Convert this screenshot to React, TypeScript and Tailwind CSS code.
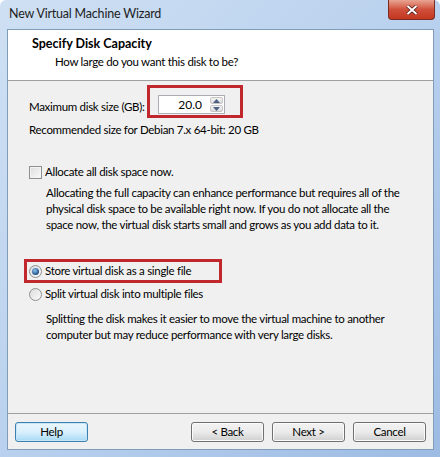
import React from 'react';

const font = { fontFamily: 'Lato, "Liberation Sans", Arial, sans-serif' };

function WinButton({ label, primary }: { label: string; primary?: boolean }) {
  return (
    <button
      className={
        primary
          ? 'h-[20px] w-[73px] rounded-[3px] border border-[#3c7fb1] bg-gradient-to-b from-[#eaf6fd] via-[#d9f0fc] to-[#a7d9f5] text-black shadow-[inset_0_0_0_1px_#c8e6f8]'
          : 'h-[20px] w-[73px] rounded-[3px] border border-[#707070] bg-gradient-to-b from-[#f2f2f2] via-[#ebebeb] to-[#cfcfcf] text-black shadow-[inset_0_0_0_1px_#fbfbfb]'
      }
    >
      {label}
    </button>
  );
}

function SpinBox() {
  return (
    <div className="flex h-[19px] w-[67px] border border-[#abadb3] bg-white">
      <div className="flex flex-1 items-center justify-end pr-[8px] text-[12px] tracking-normal text-black">20.0</div>
      <div className="flex w-[14px] flex-col gap-px py-px pr-px">
        <div className="flex flex-1 items-center justify-center rounded-[2px] border border-[#c5c5c5] bg-gradient-to-b from-[#f6f6f6] to-[#dcdcdc]">
          <svg width="7" height="4" viewBox="0 0 7 4"><path d="M0 4 L3.5 0 L7 4 Z" fill="#4d6185" /></svg>
        </div>
        <div className="flex flex-1 items-center justify-center rounded-[2px] border border-[#c5c5c5] bg-gradient-to-b from-[#f6f6f6] to-[#dcdcdc]">
          <svg width="7" height="4" viewBox="0 0 7 4"><path d="M0 0 L3.5 4 L7 0 Z" fill="#4d6185" /></svg>
        </div>
      </div>
    </div>
  );
}

function Radio({ checked }: { checked?: boolean }) {
  return (
    <div className="flex h-[13px] w-[13px] shrink-0 items-center justify-center rounded-full border border-[#8e8f8f] bg-gradient-to-br from-[#dcdcdc] to-[#fbfbfb]">
      {checked && (
        <div className="h-[7px] w-[7px] rounded-full bg-[radial-gradient(circle_at_40%_35%,#8fc4ee,#1f4f86_70%)]" />
      )}
    </div>
  );
}

export default function App() {
  return (
    <div
      className="relative flex h-[457px] w-[440px] flex-col overflow-hidden rounded-t-[6px] bg-gradient-to-br from-[#cfe0f3] via-[#b9d1ee] to-[#9dbbe3] text-black"
      style={font}
    >
      {/* Title bar */}
      <div className="flex h-[29px] items-center pl-[9px]">
        <span className="text-[12.5px] tracking-[-0.2px] text-[#1e1e1e]">New Virtual Machine Wizard</span>
      </div>
      <div className="absolute right-[5px] top-0 flex h-[20px] w-[47px] items-center justify-center rounded-b-[4px] border border-t-0 border-[#7a2b24] bg-gradient-to-b from-[#e8a493] via-[#cf4f3a] to-[#c4361f]">
        <svg width="12" height="10" viewBox="0 0 12 10">
          <path d="M1.5 1 L10.5 9 M10.5 1 L1.5 9" stroke="#4a1410" strokeWidth="3.4" />
          <path d="M1.5 1 L10.5 9 M10.5 1 L1.5 9" stroke="#ffffff" strokeWidth="2" />
        </svg>
      </div>

      {/* Client area */}
      <div className="ml-[7px] mr-[6px] flex h-[421px] flex-col whitespace-nowrap border border-[#7f9db9] bg-[#f0f0f0] text-[11.5px] tracking-[-0.3px]">
        <div className="flex h-[51px] flex-col border-b border-[#a0a0a0] bg-white pl-[24px] pt-[6px]">
          <div className="text-[12.5px] font-bold leading-[16px] tracking-normal">Specify Disk Capacity</div>
          <div className="mt-[2px] pl-[23px] leading-[16px]">How large do you want this disk to be?</div>
        </div>

        <div className="flex flex-1 flex-col pl-[21px] pr-[10px]">
          <div className="mt-[4px] flex items-end">
            <span className="mb-[3px] w-[118px] leading-[16px]">Maximum disk size (GB):</span>
            <div className="border-[3px] border-[#c0282d] pb-[1px] pl-[8px] pr-[15px] pt-[7px]">
              <SpinBox />
            </div>
          </div>
          <div className="mt-[4px] leading-[16px]">Recommended size for Debian 7.x 64-bit: 20 GB</div>

          <div className="mt-[26px] flex items-center gap-[3px]">
            <div className="h-[13px] w-[13px] border border-[#8e8f8f] bg-gradient-to-br from-[#dcdcdc] to-[#fbfbfb] shadow-[inset_0_0_0_1px_#f4f4f4]" />
            <span className="leading-[16px]">Allocate all disk space now.</span>
          </div>
          <div className="mt-[5px] pl-[17px] leading-[16px]">
            Allocating the full capacity can enhance performance but requires all of the<br />
            physical disk space to be available right now. If you do not allocate all the<br />
            space now, the virtual disk starts small and grows as you add data to it.
          </div>

          <div className="-ml-[5px] mt-[26px] flex h-[24px] w-[198px] items-center gap-[3px] border-[3px] border-[#c0282d] pl-[2px]">
            <Radio checked />
            <span className="leading-[16px]">Store virtual disk as a single file</span>
          </div>
          <div className="mt-[3px] flex h-[16px] items-center gap-[3px]">
            <Radio />
            <span className="leading-[16px]">Split virtual disk into multiple files</span>
          </div>
          <div className="mt-[9px] pl-[17px] leading-[16px]">
            Splitting the disk makes it easier to move the virtual machine to another<br />
            computer but may reduce performance with very large disks.
          </div>
        </div>

        <div className="flex h-[36px] items-center border-t border-[#a0a0a0] px-[7px]">
          <WinButton label="Help" primary />
          <div className="flex-1" />
          <div className="flex gap-[8px]">
            <WinButton label="< Back" />
            <WinButton label="Next >" />
            <WinButton label="Cancel" />
          </div>
        </div>
      </div>
    </div>
  );
}
